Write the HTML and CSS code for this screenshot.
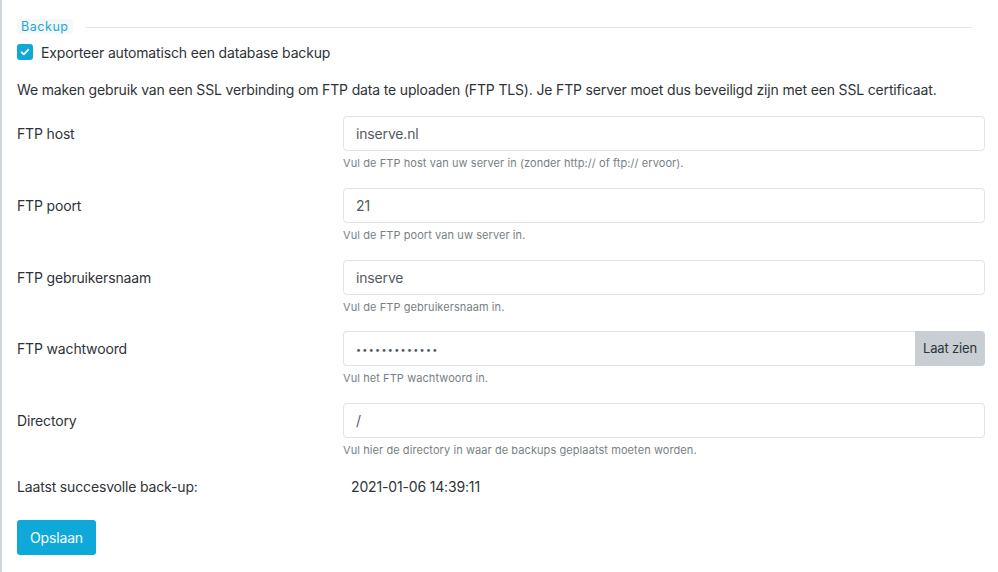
FILE: index.html
```html
<!DOCTYPE html>
<html lang="nl">
<head>
<meta charset="utf-8">
<title>Backup</title>
<link rel="stylesheet" href="styles.css">
</head>
<body>
<div class="panel">
  <div class="legend-row">
    <span class="legend">Backup</span>
    <span class="legend-line"></span>
  </div>
  <label class="check-row">
    <span class="checkbox">
      <svg viewBox="0 0 16 16" width="16" height="16"><path d="M4.6 8.3l2.2 2.1 4.4-4.6" fill="none" stroke="#fff" stroke-width="1.8" stroke-linecap="round" stroke-linejoin="round"/></svg>
    </span>
    <span>Exporteer automatisch een database backup</span>
  </label>
  <p class="intro">We maken gebruik van een SSL verbinding om FTP data te uploaden (FTP TLS). Je FTP server moet dus beveiligd zijn met een SSL certificaat.</p>

  <div class="form-row">
    <div class="label">FTP host</div>
    <div class="field">
      <div class="input">inserve.nl</div>
      <div class="help">Vul de FTP host van uw server in (zonder http:// of ftp:// ervoor).</div>
    </div>
  </div>
  <div class="form-row">
    <div class="label">FTP poort</div>
    <div class="field">
      <div class="input">21</div>
      <div class="help">Vul de FTP poort van uw server in.</div>
    </div>
  </div>
  <div class="form-row">
    <div class="label">FTP gebruikersnaam</div>
    <div class="field">
      <div class="input">inserve</div>
      <div class="help">Vul de FTP gebruikersnaam in.</div>
    </div>
  </div>
  <div class="form-row">
    <div class="label">FTP wachtwoord</div>
    <div class="field">
      <div class="input-group">
        <div class="input grouped"><span class="dots">•••••••••••••</span></div>
        <div class="addon">Laat zien</div>
      </div>
      <div class="help">Vul het FTP wachtwoord in.</div>
    </div>
  </div>
  <div class="form-row">
    <div class="label">Directory</div>
    <div class="field">
      <div class="input">/</div>
      <div class="help">Vul hier de directory in waar de backups geplaatst moeten worden.</div>
    </div>
  </div>
  <div class="static-row">
    <div class="label">Laatst succesvolle back-up:</div>
    <div class="value">2021-01-06 14:39:11</div>
  </div>
  <div class="btn">Opslaan</div>
</div>
</body>
</html>
```

FILE: styles.css
```css
html, body {
  margin: 0;
  padding: 0;
  background: #fff;
}
body {
  font-family: Inter, "Noto Sans", "Liberation Sans", sans-serif;
  font-size: 14px;
  letter-spacing: -0.16px;
  color: #2f3337;
  width: 998px;
  height: 572px;
  overflow: hidden;
}
.panel {
  border-left: 2px solid #cfd6dc;
  padding: 19px 13px 0 15px;
  height: 572px;
  box-sizing: border-box;
}
.legend-row {
  display: flex;
  align-items: center;
  height: 15px;
}
.legend {
  background: #f5f7f8;
  color: #17a9d6;
  font-size: 12.5px;
  letter-spacing: 0.55px;
  padding: 0 4px;
  line-height: 15px;
  border-radius: 3px;
}
.legend-line {
  flex: 1;
  height: 1px;
  background: #e3e6e9;
  margin: 0 13px 0 13px;
  position: relative;
  top: 1px;
}
.check-row {
  display: flex;
  align-items: center;
  gap: 8px;
  margin-top: 10px;
  height: 16px;
}
.checkbox {
  width: 16px;
  height: 16px;
  border-radius: 3px;
  background: #0ea8d9;
  display: flex;
}
.intro {
  margin: 20px 0 0 0;
  line-height: 20px;
}
.form-row {
  display: grid;
  grid-template-columns: 326px 1fr;
  margin-top: 16px;
  height: 55px;
}
.form-row + .form-row {
  margin-top: 16.75px;
}
.label {
  line-height: 35px;
}
.input {
  height: 35px;
  box-sizing: border-box;
  border: 1px solid #e0e3e6;
  border-radius: 4px;
  padding: 0 12px;
  line-height: 33px;
  color: #555a5f;
}
.input-group {
  display: flex;
}
.input.grouped {
  flex: 1;
  border-radius: 4px 0 0 4px;
  border-right: none;
}
.dots {
  font-size: 9px;
  letter-spacing: 1.3px;
  color: #555a5f;
  position: relative;
  top: -1px;
}
.addon {
  width: 70px;
  height: 35px;
  background: #c8ced4;
  border-radius: 0 4px 4px 0;
  font-size: 13px;
  line-height: 35px;
  text-align: center;
  color: #2f3337;
}
.help {
  font-size: 11px;
  color: #787f86;
  margin-top: 5px;
  line-height: 15px;
  letter-spacing: 0.08px;
}
.static-row {
  display: grid;
  grid-template-columns: 334px 1fr;
  margin-top: 19px;
}
.static-row .label {
  line-height: 20px;
}
.value {
  line-height: 20px;
}
.btn {
  display: inline-block;
  margin-top: 23px;
  width: 79px;
  height: 35px;
  line-height: 35px;
  text-align: center;
  background: #0ea8d9;
  color: #fff;
  border-radius: 3px;
}
```
